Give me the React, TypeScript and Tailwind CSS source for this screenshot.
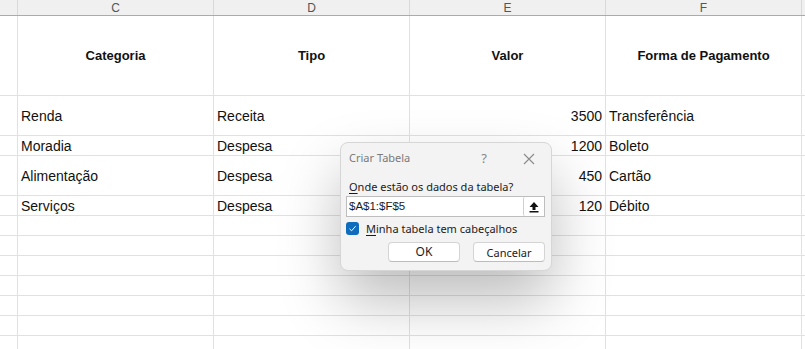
import React from 'react';

type Row = { h: string; c?: string; d?: string; e?: string; f?: string; bold?: boolean };

const rows: Row[] = [
  { h: 'h-[80px]', c: 'Categoria', d: 'Tipo', e: 'Valor', f: 'Forma de Pagamento', bold: true },
  { h: 'h-[40px]', c: 'Renda', d: 'Receita', e: '3500', f: 'Transferência' },
  { h: 'h-[20px]', c: 'Moradia', d: 'Despesa', e: '1200', f: 'Boleto' },
  { h: 'h-[40px]', c: 'Alimentação', d: 'Despesa', e: '450', f: 'Cartão' },
  { h: 'h-[20px]', c: 'Serviços', d: 'Despesa', e: '120', f: 'Débito' },
  { h: 'h-[20px]' },
  { h: 'h-[20px]' },
  { h: 'h-[20px]' },
  { h: 'h-[20px]' },
  { h: 'h-[20px]' },
  { h: 'h-[20px]' },
  { h: 'h-[20px]' },
];

const cell = 'border-r border-b border-[#e1e1e1] flex items-center shrink-0';

function CriarTabelaDialog() {
  return (
    <div className="absolute left-[340px] top-[142px] w-[212px] h-[129px] rounded-[8px] border border-[#d6d6d6] bg-[#f3f3f3] shadow-[0_30px_60px_rgba(0,0,0,0.26)] px-[5px] flex flex-col text-[11px] text-[#1b1b1b] font-['Noto_Sans',sans-serif]">
      {/* Title bar */}
      <div className="h-[31px] flex items-center pl-[3px] text-[#7a7a7a]">
        <span className="text-[11px]">Criar Tabela</span>
        <span className="ml-auto w-[14px] text-center text-[13px] text-[#888]">?</span>
        <span className="ml-[31px] mr-[10px] w-[14px] flex justify-center">
          <svg width="12" height="12" viewBox="0 0 12 12">
            <path d="M1 1L11 11M11 1L1 11" stroke="#8a8a8a" strokeWidth="1.1" />
          </svg>
        </span>
      </div>

      {/* Label */}
      <div className="h-[22px] flex items-center pt-[3px] pl-[3px] leading-none">
        <span><span className="underline underline-offset-2">O</span>nde estão os dados da tabela?</span>
      </div>

      {/* Range input */}
      <div className="h-[21px] mr-[1px] flex items-stretch bg-white border border-[#bdbdbd]">
        <span className="flex-1 flex items-center pl-[2px] text-[11.5px] font-['Liberation_Sans',Arial,sans-serif]">$A$1:$F$5</span>
        <span className="w-[21px] flex items-center justify-center border-l border-[#d0d0d0] rounded-[2px]">
          <svg width="10" height="12" viewBox="0 0 10 12">
            <path d="M5 1L9.5 6H6.5V9H3.5V6H0.5Z" fill="#111" />
            <rect x="0.5" y="10" width="9" height="1.5" fill="#111" />
          </svg>
        </span>
      </div>

      {/* Checkbox */}
      <div className="mt-[5px] h-[13px] flex items-center">
        <span className="w-[13px] h-[13px] rounded-[3px] bg-[#0f6cbd] flex items-center justify-center">
          <svg width="9" height="9" viewBox="0 0 9 9">
            <path d="M1.5 4.8L3.6 6.8L7.6 2.2" stroke="white" strokeWidth="1" fill="none" />
          </svg>
        </span>
        <span className="ml-[7px] leading-none">
          <span className="underline underline-offset-2">M</span>inha tabela tem cabeçalhos
        </span>
      </div>

      {/* Buttons */}
      <div className="mt-[7px] flex justify-end gap-[13px] pr-[1px]">
        <button className="w-[72px] h-[20px] rounded-[4px] bg-white border border-[#d4d4d4] border-b-[#bcbcbc] text-[12px] leading-none">OK</button>
        <button className="w-[72px] h-[20px] rounded-[4px] bg-[#fdfdfd] border border-[#d4d4d4] border-b-[#bcbcbc] text-[11px] leading-none">Cancelar</button>
      </div>
    </div>
  );
}

export default function App() {
  const cols: (keyof Row)[] = ['c', 'd', 'e', 'f'];
  return (
    <div className="relative w-[805px] h-[349px] overflow-hidden bg-white font-['Liberation_Sans',Arial,sans-serif] text-[14px] text-[#111]">
      {/* Column headers */}
      <div className="flex h-[16px] bg-[#f0f0f0] border-b border-[#ababab] text-[12px] text-[#555]">
        <div className="w-[18px] shrink-0 border-r border-[#d9d9d9]" />
        {['C', 'D', 'E', 'F'].map((l) => (
          <div key={l} className="w-[196px] shrink-0 border-r border-[#d9d9d9] flex items-center justify-center leading-none">
            {l}
          </div>
        ))}
        <div className="flex-1" />
      </div>

      {/* Rows */}
      {rows.map((r, i) => (
        <div key={i} className={`flex ${r.h}`}>
          <div className={`${cell} w-[18px]`} />
          {cols.map((k) => (
            <div
              key={k}
              className={`${cell} w-[196px] px-[3px] ${r.bold ? 'justify-center font-bold text-[13px] pt-[1px]' : 'pt-[2px]'} ${
                k === 'e' && !r.bold ? 'justify-end' : ''
              }`}
            >
              {r[k] as string}
            </div>
          ))}
          <div className="flex-1 border-b border-[#e1e1e1]" />
        </div>
      ))}

      <CriarTabelaDialog />
    </div>
  );
}
